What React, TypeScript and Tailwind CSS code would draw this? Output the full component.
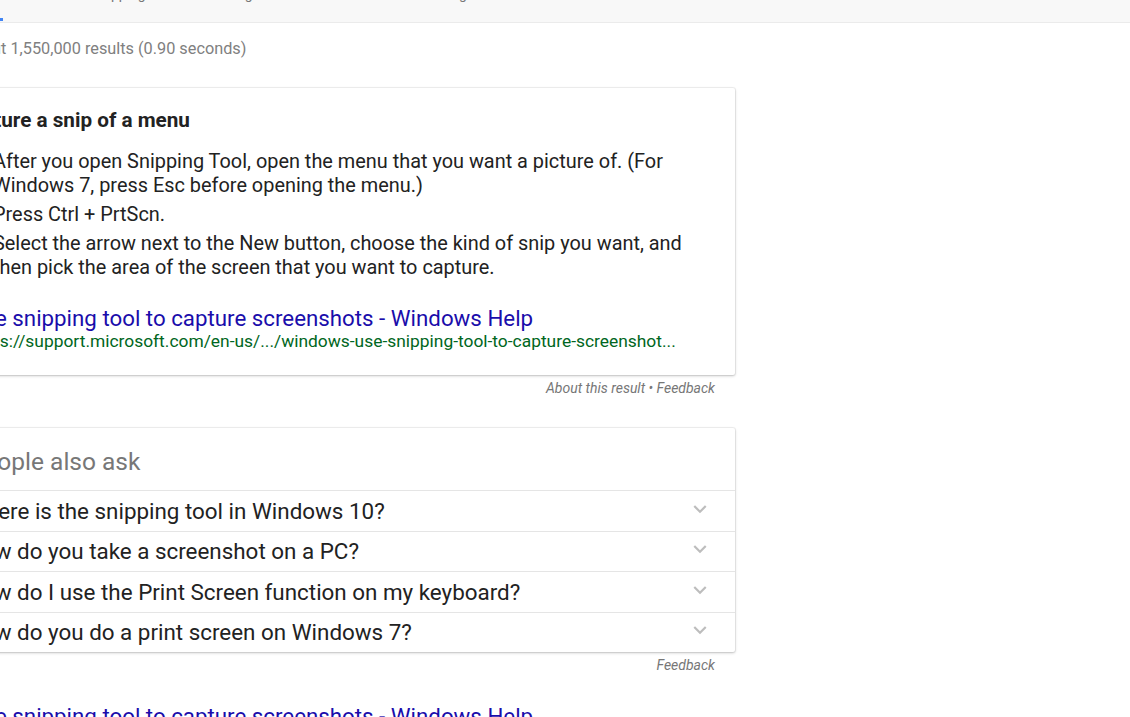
import React from 'react';

const questions = [
  'Where is the snipping tool in Windows 10?',
  'How do you take a screenshot on a PC?',
  'How do I use the Print Screen function on my keyboard?',
  'How do you do a print screen on Windows 7?',
];

function ExpandMore() {
  return (
    <svg viewBox="0 0 24 24" className="w-[26px] h-[26px] mt-[-4px]" fill="#bdbdbd" aria-hidden="true">
      <path d="M16.59 8.59L12 13.17 7.41 8.59 6 10l6 6 6-6z" />
    </svg>
  );
}

export default function App() {
  return (
    <div className="w-[1130px] h-[717px] overflow-hidden bg-white font-['Roboto','Liberation_Sans',sans-serif] text-[#222]">
      {/* tabs bar, labels are scrolled off the top */}
      <div className="h-[23px] bg-[#f8f8f8] border-b border-[#ebebeb] flex items-start text-[14px] leading-[14px] text-[#777]">
        <div className="ml-[-30px] w-[33px] h-[21px] border-b-[3px] border-[#4285f4] shrink-0">
          <span className="block mt-[-13px]">All</span>
        </div>
        <span className="mt-[-13px] ml-[24px] w-[60px] shrink-0">Videos</span>
        <span className="mt-[-13px] w-[80px] shrink-0">Shopping</span>
        <span className="mt-[-13px] w-[54px] shrink-0">News</span>
        <span className="mt-[-13px] w-[60px] shrink-0">Images</span>
        <span className="mt-[-13px] w-[142px] shrink-0">More</span>
        <span className="mt-[-13px] w-[70px] shrink-0">Settings</span>
        <span className="mt-[-13px] shrink-0">Tools</span>
      </div>

      <div className="ml-[-31px] w-[750px]">
        <div className="mt-[16px] ml-[-6px] text-[16.3px] leading-[20px] text-[#808080]">
          About 1,550,000 results (0.90 seconds)
        </div>

        {/* featured snippet */}
        <div className="mt-[29px] mx-[-16px] px-[16px] pt-[20px] pb-[24px] rounded-[2px] bg-white shadow-[0_0_0_1px_rgba(0,0,0,0.05),0_1px_3px_rgba(0,0,0,0.22)]">
          <h3 className="ml-[-11px] text-[20.7px] leading-[24px] font-bold text-[#222]">Capture a snip of a menu</h3>
          <ol className="mt-[18px] ml-[-3px] mr-[3px] list-decimal pl-[27px] text-[19.9px] leading-[24px] text-[#222]">
            <li>After you open Snipping Tool, open the menu that you want a picture of. (For Windows 7, press Esc before opening the menu.)</li>
            <li className="mt-[5px]">Press Ctrl + PrtScn.</li>
            <li className="mt-[5px]">Select the arrow next to the New button, choose the kind of snip you want, and then pick the area of the screen that you want to capture.</li>
          </ol>
          <div className="mt-[25px] text-[22.3px] leading-[26px] text-[#1a0dab]">Use snipping tool to capture screenshots - Windows Help</div>
          <div className="text-[17.4px] leading-[20px] text-[#006621] whitespace-nowrap">
            https://support.microsoft.com/en-us/.../windows-use-snipping-tool-to-capture-screenshot...
          </div>
        </div>
        <div className="mt-[4px] text-right pr-[4px] text-[14px] leading-[18px] italic text-[#777]">
          About this result • Feedback
        </div>

        {/* people also ask */}
        <div className="mt-[31px] mx-[-16px] rounded-[2px] bg-white shadow-[0_0_0_1px_rgba(0,0,0,0.05),0_1px_3px_rgba(0,0,0,0.22)]">
          <div className="px-[16px] pt-[20px] pb-[14px] text-[24.5px] leading-[28px] text-[#777]">People also ask</div>
          {questions.map((q) => (
            <div
              key={q}
              className="h-[40.5px] border-t border-[#e5e5e5] pl-[13px] pr-[22px] flex items-center justify-between"
            >
              <span className="text-[22.4px] leading-[26px] text-[#222]">{q}</span>
              <ExpandMore />
            </div>
          ))}
        </div>
        <div className="mt-[4px] text-right pr-[4px] text-[14px] leading-[18px] italic text-[#777]">Feedback</div>

        <div className="mt-[29px] text-[22.3px] leading-[26px] text-[#1a0dab]">
          Use snipping tool to capture screenshots - Windows Help
        </div>
      </div>
    </div>
  );
}
